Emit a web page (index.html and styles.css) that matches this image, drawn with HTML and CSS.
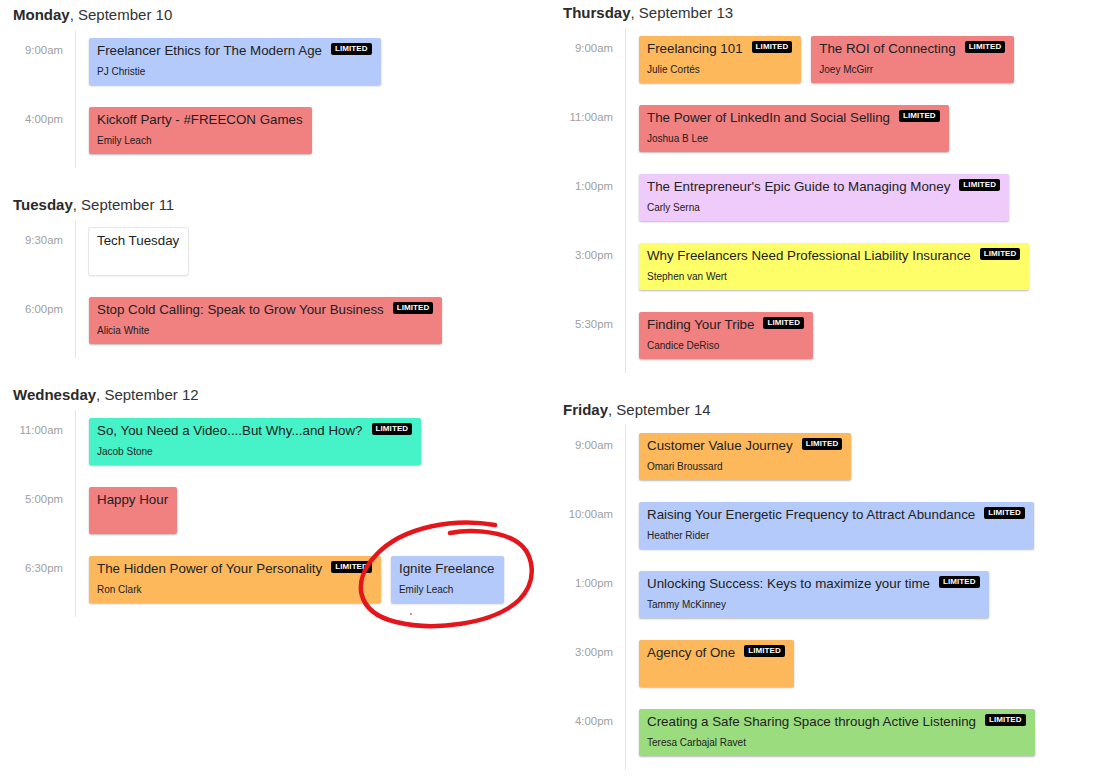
FILE: index.html
```html
<!DOCTYPE html>
<html lang="en">
<head>
<meta charset="utf-8">
<title>Schedule</title>
<link rel="stylesheet" href="styles.css">
</head>
<body>
<div class="page">
  <div class="col col-left">
    <section class="day">
      <h2 class="day-title"><b>Monday</b>, September 10</h2>
      <div class="timeline">
        <div class="row"><div class="time">9:00am</div><div class="slot">
          <div class="card blue"><div class="card-head"><span class="title">Freelancer Ethics for The Modern Age</span><span class="badge">LIMITED</span></div><div class="speaker">PJ Christie</div></div>
        </div></div>
        <div class="row"><div class="time">4:00pm</div><div class="slot">
          <div class="card red"><div class="card-head"><span class="title">Kickoff Party - #FREECON Games</span></div><div class="speaker">Emily Leach</div></div>
        </div></div>
      </div>
    </section>
    <section class="day">
      <h2 class="day-title"><b>Tuesday</b>, September 11</h2>
      <div class="timeline">
        <div class="row"><div class="time">9:30am</div><div class="slot">
          <div class="card white"><div class="card-head"><span class="title">Tech Tuesday</span></div></div>
        </div></div>
        <div class="row"><div class="time">6:00pm</div><div class="slot">
          <div class="card red"><div class="card-head"><span class="title">Stop Cold Calling: Speak to Grow Your Business</span><span class="badge">LIMITED</span></div><div class="speaker">Alicia White</div></div>
        </div></div>
      </div>
    </section>
    <section class="day">
      <h2 class="day-title"><b>Wednesday</b>, September 12</h2>
      <div class="timeline">
        <div class="row"><div class="time">11:00am</div><div class="slot">
          <div class="card teal"><div class="card-head"><span class="title">So, You Need a Video....But Why...and How?</span><span class="badge">LIMITED</span></div><div class="speaker">Jacob Stone</div></div>
        </div></div>
        <div class="row"><div class="time">5:00pm</div><div class="slot">
          <div class="card red"><div class="card-head"><span class="title">Happy Hour</span></div></div>
        </div></div>
        <div class="row"><div class="time">6:30pm</div><div class="slot">
          <div class="card orange"><div class="card-head"><span class="title">The Hidden Power of Your Personality</span><span class="badge">LIMITED</span></div><div class="speaker">Ron Clark</div></div>
          <div class="card blue"><div class="card-head"><span class="title">Ignite Freelance</span></div><div class="speaker">Emily Leach</div></div>
        </div></div>
      </div>
    </section>
  </div>

  <div class="col col-right">
    <section class="day">
      <h2 class="day-title"><b>Thursday</b>, September 13</h2>
      <div class="timeline">
        <div class="row"><div class="time">9:00am</div><div class="slot">
          <div class="card orange"><div class="card-head"><span class="title">Freelancing 101</span><span class="badge">LIMITED</span></div><div class="speaker">Julie Cortés</div></div>
          <div class="card red"><div class="card-head"><span class="title">The ROI of Connecting</span><span class="badge">LIMITED</span></div><div class="speaker">Joey McGirr</div></div>
        </div></div>
        <div class="row"><div class="time">11:00am</div><div class="slot">
          <div class="card red"><div class="card-head"><span class="title">The Power of LinkedIn and Social Selling</span><span class="badge">LIMITED</span></div><div class="speaker">Joshua B Lee</div></div>
        </div></div>
        <div class="row"><div class="time">1:00pm</div><div class="slot">
          <div class="card purple"><div class="card-head"><span class="title">The Entrepreneur's Epic Guide to Managing Money</span><span class="badge">LIMITED</span></div><div class="speaker">Carly Serna</div></div>
        </div></div>
        <div class="row"><div class="time">3:00pm</div><div class="slot">
          <div class="card yellow"><div class="card-head"><span class="title">Why Freelancers Need Professional Liability Insurance</span><span class="badge">LIMITED</span></div><div class="speaker">Stephen van Wert</div></div>
        </div></div>
        <div class="row"><div class="time">5:30pm</div><div class="slot">
          <div class="card red"><div class="card-head"><span class="title">Finding Your Tribe</span><span class="badge">LIMITED</span></div><div class="speaker">Candice DeRiso</div></div>
        </div></div>
      </div>
    </section>
    <section class="day">
      <h2 class="day-title"><b>Friday</b>, September 14</h2>
      <div class="timeline">
        <div class="row"><div class="time">9:00am</div><div class="slot">
          <div class="card orange"><div class="card-head"><span class="title">Customer Value Journey</span><span class="badge">LIMITED</span></div><div class="speaker">Omari Broussard</div></div>
        </div></div>
        <div class="row"><div class="time">10:00am</div><div class="slot">
          <div class="card blue"><div class="card-head"><span class="title">Raising Your Energetic Frequency to Attract Abundance</span><span class="badge">LIMITED</span></div><div class="speaker">Heather Rider</div></div>
        </div></div>
        <div class="row"><div class="time">1:00pm</div><div class="slot">
          <div class="card blue"><div class="card-head"><span class="title">Unlocking Success: Keys to maximize your time</span><span class="badge">LIMITED</span></div><div class="speaker">Tammy McKinney</div></div>
        </div></div>
        <div class="row"><div class="time">3:00pm</div><div class="slot">
          <div class="card orange"><div class="card-head"><span class="title">Agency of One</span><span class="badge">LIMITED</span></div></div>
        </div></div>
        <div class="row"><div class="time">4:00pm</div><div class="slot">
          <div class="card green"><div class="card-head"><span class="title">Creating a Safe Sharing Space through Active Listening</span><span class="badge">LIMITED</span></div><div class="speaker">Teresa Carbajal Ravet</div></div>
        </div></div>
      </div>
    </section>
  </div>
</div>

<svg class="annotation" width="1105" height="783" viewBox="0 0 1105 783" aria-hidden="true">
  <path d="M 495 525 C 455 518, 403 526, 376 555 C 352 580, 355 612, 396 622 C 432 631, 493 625, 519 600 C 539 580, 534 551, 514 540 C 497 531, 470 529, 450 533" fill="none" stroke="#e5161b" stroke-width="4.5" stroke-linecap="round"/>
  <circle cx="411" cy="614" r="1" fill="#d66"/>
</svg>
</body>
</html>
```

FILE: styles.css
```css
html, body {
  margin: 0;
  padding: 0;
  background: #ffffff;
}

body {
  font-family: "Liberation Sans", Arial, sans-serif;
  color: #222222;
  width: 1105px;
  height: 783px;
  overflow: hidden;
  position: relative;
}

.page {
  display: flex;
  align-items: flex-start;
}

.col {
  box-sizing: border-box;
  padding-left: 13px;
}

.col-left {
  width: 550px;
  padding-top: 5px;
}

.col-right {
  flex: 1;
  padding-top: 3px;
}

.day + .day {
  margin-top: 27px;
}

.day-title {
  margin: 0 0 5px 0;
  font-size: 15px;
  line-height: 20px;
  font-weight: normal;
  color: #333333;
  white-space: nowrap;
}

.day-title b {
  font-weight: bold;
  color: #2a2a2a;
}

.row {
  display: flex;
}

.time {
  width: 62px;
  box-sizing: border-box;
  padding: 11px 12px 0 0;
  text-align: right;
  font-size: 11.4px;
  line-height: 18px;
  color: #a0a0a0;
  white-space: nowrap;
}

.slot {
  flex: 1;
  border-left: 1px solid #e6e6e6;
  padding: 8px 0 14px 13px;
  display: flex;
  gap: 10px;
  align-items: flex-start;
}

.card {
  box-sizing: border-box;
  min-height: 47px;
  padding: 4px 9px 7px 8px;
  border-radius: 2px;
  box-shadow: 0 1px 2px rgba(0, 0, 0, 0.28);
}

.card-head {
  display: flex;
  align-items: flex-start;
  gap: 9px;
}

.title {
  font-size: 13.33px;
  line-height: 18px;
  color: #222222;
  white-space: nowrap;
}

.badge {
  margin-top: 1px;
  padding: 0 4px;
  background: #000000;
  color: #ffffff;
  font-size: 8px;
  font-weight: bold;
  line-height: 12px;
  border-radius: 2px;
  letter-spacing: 0.1px;
  white-space: nowrap;
}

.speaker {
  margin-top: 6px;
  font-size: 10px;
  line-height: 12px;
  color: #222222;
  white-space: nowrap;
}

.blue { background: #b4cafa; }
.red { background: #f18080; }
.orange { background: #fdb85c; }
.teal { background: #46f2c7; }
.purple { background: #eecbfa; }
.yellow { background: #fefe68; }
.green { background: #9bdd7e; }
.white {
  background: #ffffff;
  box-shadow: 0 0 0 1px #e6e6e6, 0 1px 2px rgba(0, 0, 0, 0.2);
}

.annotation {
  position: absolute;
  top: 0;
  left: 0;
  pointer-events: none;
}
```
